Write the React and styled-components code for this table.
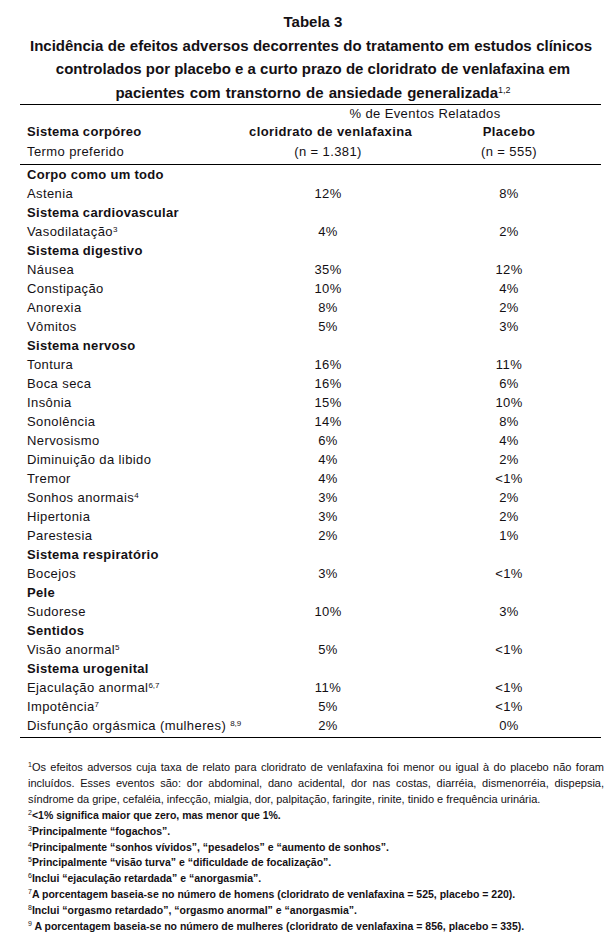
import React from 'react';
import styled, { createGlobalStyle } from 'styled-components';

const GlobalStyle = createGlobalStyle`
  html, body {
    margin: 0;
    padding: 0;
    background: #fff;
  }
  body {
    font-family: "Liberation Sans", Arial, sans-serif;
    color: #141014;
  }
`;

const Page = styled.div`
  width: 615px;
  height: 940px;
  padding-top: 10px;
  box-sizing: border-box;
  overflow: hidden;
`;

const Caption = styled.div`
  margin: 0 17px 0 28px;
  font-weight: bold;
  font-size: 15px;
  line-height: 23.5px;
  text-align: center;
`;

const CaptionLine = styled.div`
  white-space: nowrap;
  word-spacing: ${(p) => p.ws || 0}px;
  ${(p) => p.justify && `
    text-align: justify;
    text-align-last: justify;
    margin: 0 6px 0 2px;
  `}
`;

const Sup = styled.sup`
  font-size: ${(p) => p.size || 8}px;
  line-height: 0;
  vertical-align: ${(p) => p.up || 4}px;
  font-weight: normal;
  letter-spacing: 0;
  word-spacing: 0;
`;

const Table = styled.div`
  margin-left: 20px;
  width: 581px;
  border-top: 1px solid #000;
  border-bottom: 1px solid #000;
  padding-bottom: 2px;
`;

const Head = styled.div`
  border-bottom: 1px solid #000;
  padding-bottom: 3px;
`;

const Row = styled.div`
  display: grid;
  grid-template-columns: 222px 158px 1fr;
  padding-left: 7px;
  font-size: 13px;
  line-height: ${(p) => p.lh || 19}px;
  white-space: nowrap;
`;

const Label = styled.div`
  font-weight: ${(p) => (p.bold ? 'bold' : 'normal')};
  letter-spacing: ${(p) => (p.bold ? '0.3px' : '0.4px')};
`;

const Val = styled.div`
  text-align: center;
  letter-spacing: 0.4px;
  font-weight: ${(p) => (p.bold ? 'bold' : 'normal')};
  padding-left: ${(p) => (p.last ? '10px' : '0')};
`;

const Span = styled.div`
  grid-column: 2 / 4;
  text-align: center;
  letter-spacing: 0.4px;
`;

const Notes = styled.div`
  margin: 22px 0 0 28px;
  width: 576px;
  font-size: 10.5px;
  line-height: 15.9px;
`;

const NoteLine = styled.div`
  white-space: nowrap;
  font-weight: ${(p) => (p.bold ? 'bold' : 'normal')};
  ${(p) => !p.bold && 'font-size: 11px;'}
  ${(p) => p.justify && `
    text-align: justify;
    text-align-last: justify;
  `}
`;

const rows = [
  { group: 'Corpo como um todo' },
  { name: 'Astenia', a: '12%', b: '8%' },
  { group: 'Sistema cardiovascular' },
  { name: 'Vasodilatação', sup: '3', a: '4%', b: '2%' },
  { group: 'Sistema digestivo' },
  { name: 'Náusea', a: '35%', b: '12%' },
  { name: 'Constipação', a: '10%', b: '4%' },
  { name: 'Anorexia', a: '8%', b: '2%' },
  { name: 'Vômitos', a: '5%', b: '3%' },
  { group: 'Sistema nervoso' },
  { name: 'Tontura', a: '16%', b: '11%' },
  { name: 'Boca seca', a: '16%', b: '6%' },
  { name: 'Insônia', a: '15%', b: '10%' },
  { name: 'Sonolência', a: '14%', b: '8%' },
  { name: 'Nervosismo', a: '6%', b: '4%' },
  { name: 'Diminuição da libido', a: '4%', b: '2%' },
  { name: 'Tremor', a: '4%', b: '<1%' },
  { name: 'Sonhos anormais', sup: '4', a: '3%', b: '2%' },
  { name: 'Hipertonia', a: '3%', b: '2%' },
  { name: 'Parestesia', a: '2%', b: '1%' },
  { group: 'Sistema respiratório' },
  { name: 'Bocejos', a: '3%', b: '<1%' },
  { group: 'Pele' },
  { name: 'Sudorese', a: '10%', b: '3%' },
  { group: 'Sentidos' },
  { name: 'Visão anormal', sup: '5', a: '5%', b: '<1%' },
  { group: 'Sistema urogenital' },
  { name: 'Ejaculação anormal', sup: '6,7', a: '11%', b: '<1%' },
  { name: 'Impotência', sup: '7', a: '5%', b: '<1%' },
  { name: 'Disfunção orgásmica (mulheres) ', sup: '8,9', a: '2%', b: '0%' },
];

const notes = [
  ['2', '<1% significa maior que zero, mas menor que 1%.'],
  ['3', 'Principalmente “fogachos”.'],
  ['4', 'Principalmente “sonhos vívidos”, “pesadelos” e “aumento de sonhos”.'],
  ['5', 'Principalmente “visão turva” e “dificuldade de focalização”.'],
  ['6', 'Inclui “ejaculação retardada” e “anorgasmia”.'],
  ['7', 'A porcentagem baseia-se no número de homens (cloridrato de venlafaxina = 525, placebo = 220).'],
  ['8', 'Inclui “orgasmo retardado”, “orgasmo anormal” e “anorgasmia”.'],
  ['9', ' A porcentagem baseia-se no número de mulheres (cloridrato de venlafaxina = 856, placebo = 335).'],
];

export default function App() {
  return (
    <Page>
      <GlobalStyle />
      <Caption>
        <CaptionLine>Tabela 3</CaptionLine>
        <CaptionLine justify>
          Incidência de efeitos adversos decorrentes do tratamento em estudos clínicos
        </CaptionLine>
        <CaptionLine>
          controlados por placebo e a curto prazo de cloridrato de venlafaxina em
        </CaptionLine>
        <CaptionLine ws={1}>
          pacientes com transtorno de ansiedade generalizada<Sup size={9} up={5}>1,2</Sup>
        </CaptionLine>
      </Caption>

      <Table>
        <Head>
          <Row lh={17}>
            <Span>% de Eventos Relatados</Span>
          </Row>
          <Row lh={19.5}>
            <Label bold>Sistema corpóreo</Label>
            <Val bold>cloridrato de venlafaxina</Val>
            <Val bold last>Placebo</Val>
          </Row>
          <Row lh={19.5}>
            <Label>Termo preferido</Label>
            <Val>(n = 1.381)</Val>
            <Val last>(n = 555)</Val>
          </Row>
        </Head>

        {rows.map((r, i) =>
          r.group ? (
            <Row key={i}>
              <Label bold>{r.group}</Label>
            </Row>
          ) : (
            <Row key={i}>
              <Label>
                {r.name}
                {r.sup && <Sup>{r.sup}</Sup>}
              </Label>
              <Val>{r.a}</Val>
              <Val last>{r.b}</Val>
            </Row>
          )
        )}
      </Table>

      <Notes>
        <NoteLine justify>
          <Sup size={7}>1</Sup>Os efeitos adversos cuja taxa de relato para cloridrato de venlafaxina foi menor ou igual à do placebo não foram
        </NoteLine>
        <NoteLine justify>
          incluídos. Esses eventos são: dor abdominal, dano acidental, dor nas costas, diarréia, dismenorréia, dispepsia,
        </NoteLine>
        <NoteLine>
          síndrome da gripe, cefaléia, infecção, mialgia, dor, palpitação, faringite, rinite, tinido e frequência urinária.
        </NoteLine>
        {notes.map(([n, t]) => (
          <NoteLine bold key={n}>
            <Sup size={7}>{n}</Sup>
            {t}
          </NoteLine>
        ))}
      </Notes>
    </Page>
  );
}
